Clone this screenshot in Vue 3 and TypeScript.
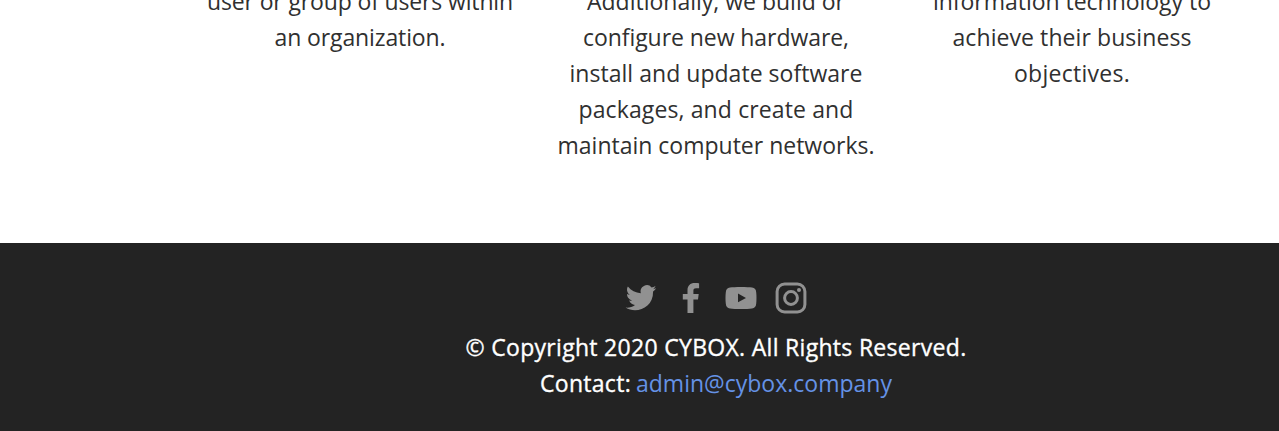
<script setup lang="ts">
import { nextTick, onMounted, ref } from 'vue'

interface Line {
  text: string
  width: number
}

const columns: Line[][] = [
  [
    { text: 'user or group of users within', width: 306 },
    { text: 'an organization.', width: 171 },
  ],
  [
    { text: 'Additionally, we build or', width: 258 },
    { text: 'configure new hardware,', width: 266 },
    { text: 'install and update software', width: 293 },
    { text: 'packages, and create and', width: 275 },
    { text: 'maintain computer networks.', width: 317 },
  ],
  [
    { text: 'information technology to', width: 278 },
    { text: 'achieve their business', width: 239 },
    { text: 'objectives.', width: 116 },
  ],
]

const root = ref<HTMLElement | null>(null)

// Tracks each line out to its measure.
onMounted(async () => {
  await nextTick()
  root.value?.querySelectorAll<HTMLElement>('[data-measure]').forEach((el) => {
    const target = Number(el.dataset.measure)
    const length = (el.textContent ?? '').length
    const spacing = (target - el.getBoundingClientRect().width) / length
    el.style.letterSpacing = `${spacing}px`
  })
})
</script>

<template>
  <div ref="root" class="page">
    <section class="services">
      <div v-for="(lines, i) in columns" :key="i" class="column">
        <p v-for="line in lines" :key="line.text" class="line">
          <span class="fit" :data-measure="line.width">{{ line.text }}</span>
        </p>
      </div>
    </section>
    <footer class="footer">
      <nav class="social">
        <a class="icon" aria-label="Twitter">
          <svg viewBox="0 0 32 32"><path d="M31.200 6.300c-1.1.5-2.300.8-3.400.9 1.300-.8 2.200-1.900 2.700-3.300-1.200.7-2.500 1.200-3.900 1.500A6.300 6.300 0 0 0 15.800 11.200C10.700 10.900 6 8.500 2.900 4.600c-1.700 2.800-.8 6.500 1.900 8.300-1 0-2-.3-2.800-.8 0 3 2.100 5.700 5 6.300-.9.3-1.900.3-2.800.1.800 2.500 3.100 4.300 5.800 4.400C7.300 25 4 26 .6 25.600c10 6.300 27.700 1.200 27.500-16.100 1.200-.9 2.300-2 3.100-3.200z"/></svg>
        </a>
        <a class="icon" aria-label="Facebook">
          <svg viewBox="0 0 32 32"><path d="M12.500 31V17.500H7.800V12h4.700V8.200C12.500 3.700 15.200 1 19.700 1c2 0 3.900.2 4.400.3v5h-3c-2.300 0-2.700 1.100-2.700 2.700v3h5.300l-.7 5.500h-4.600V31z"/></svg>
        </a>
        <a class="icon" aria-label="YouTube">
          <svg viewBox="0 0 32 32"><path fill-rule="evenodd" d="M5 5.600c4-.7 18-.7 22 0 2.800.3 4 1.900 4.200 4.700.4 3.500.4 8 0 11.400-.3 2.900-1.500 4.300-4.200 4.700-5 .7-17 .7-22 0C2.300 26.100 1.100 24.600.8 21.700c-.4-3.400-.4-7.900 0-11.400C1.100 7.500 2.200 5.900 5 5.600zM13 11.500v8.800l8-4.400z"/></svg>
        </a>
        <a class="icon" aria-label="Instagram">
          <svg viewBox="0 0 32 32"><rect x="2.100" y="2.100" width="27.800" height="27.800" rx="7.500" fill="none" stroke="currentColor" stroke-width="3"/><circle cx="16" cy="16" r="6.400" fill="none" stroke="currentColor" stroke-width="3"/><circle cx="24" cy="8" r="2"/></svg>
        </a>
      </nav>
      <p class="line"><span class="fit strong" data-measure="501">© Copyright 2020 CYBOX. All Rights Reserved.</span></p>
      <p class="line contact"><span class="fit strong" data-measure="91">Contact:</span><a class="fit mail" data-measure="256">admin@cybox.company</a></p>
    </footer>
  </div>
</template>

<style>
body {
  margin: 0;
  overflow: hidden;
}
</style>

<style scoped>
.page {
  height: 431px;
  display: flex;
  flex-direction: column;
  overflow: hidden;
  background: #fff;
  color: #303030;
  font-family: "Open Sans", "Noto Sans", sans-serif;
  font-size: 23px;
  font-weight: 400;
  line-height: 36px;
}
.services {
  box-sizing: border-box;
  height: 243px;
  flex: none;
  display: grid;
  grid-template-columns: repeat(3, 356px);
  padding-left: 182px;
}
.column {
  margin-top: -17px;
}
.line {
  margin: 0;
  height: 36px;
  display: flex;
  justify-content: center;
  white-space: nowrap;
}
.footer {
  box-sizing: border-box;
  flex: 1;
  padding: 39px 0 0 153px;
  background: #232323;
  color: #fff;
}
.social {
  display: flex;
  justify-content: center;
  gap: 18px;
  margin-bottom: 15px;
}
.icon {
  width: 32px;
  height: 32px;
  color: #919191;
}
.icon svg {
  display: block;
  width: 32px;
  height: 32px;
  fill: currentColor;
}
.strong {
  -webkit-text-stroke: 0.35px #fff;
}
.contact {
  gap: 5px;
}
.mail {
  color: #6592e6;
}
</style>
